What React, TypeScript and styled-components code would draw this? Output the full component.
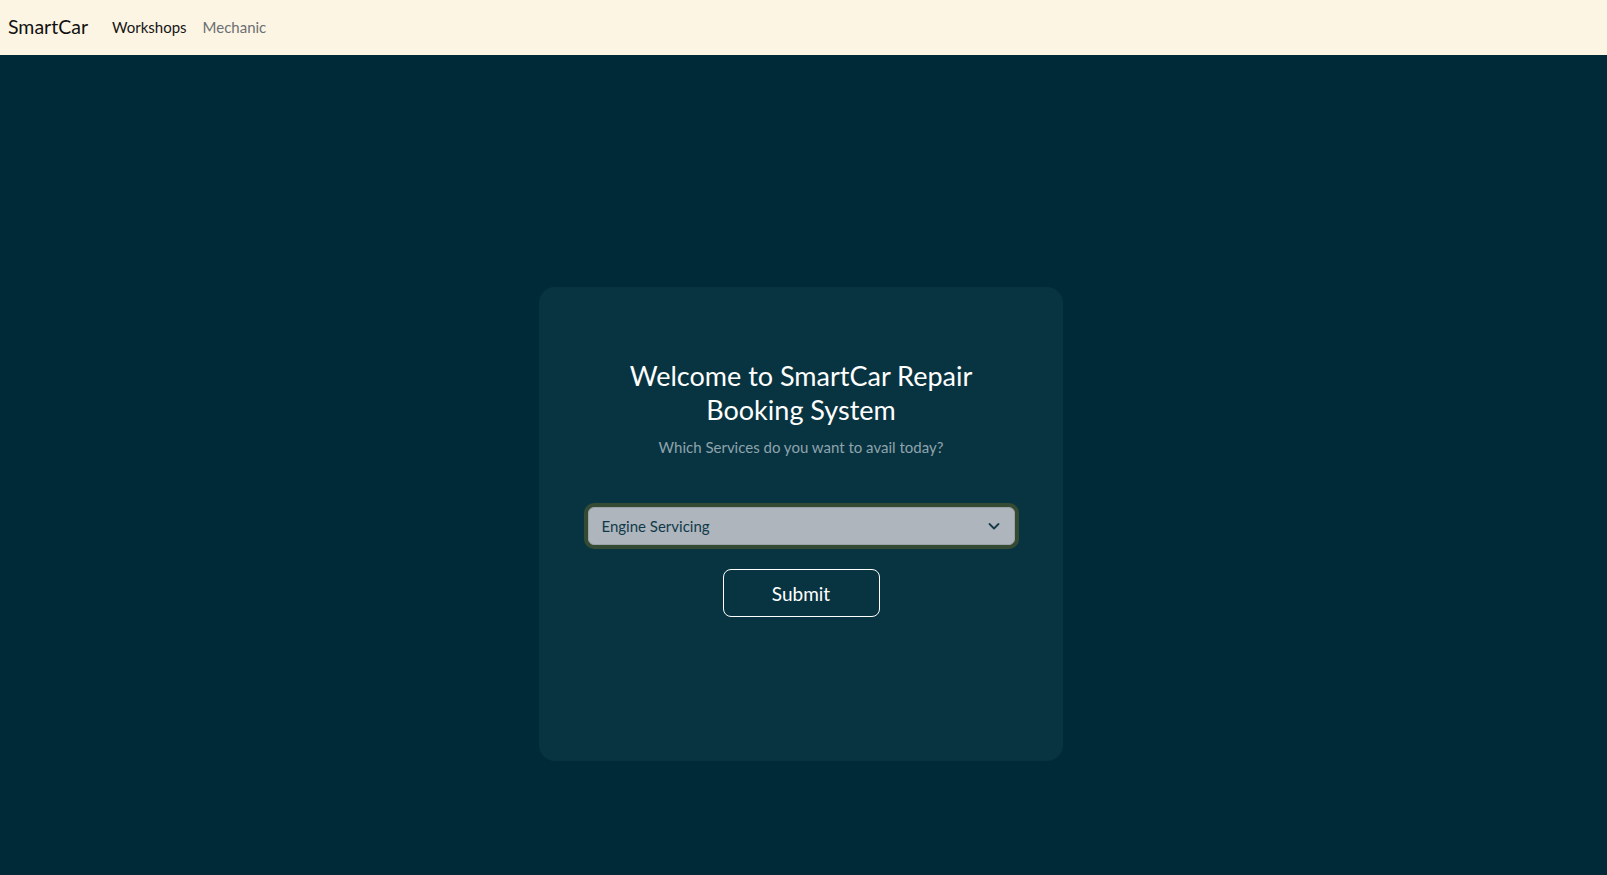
import React from "react";
import styled, { createGlobalStyle } from "styled-components";

const Global = createGlobalStyle`
  html, body { margin: 0; padding: 0; }
  body {
    background: #012a38;
    font-family: "Source Sans Pro", Lato, "Noto Sans", sans-serif;
  }
  * { box-sizing: border-box; }
`;

const Page = styled.div`
  min-height: 875px;
  background: #012a38;
  display: flex;
  flex-direction: column;
`;

const NavBar = styled.nav`
  height: 55px;
  background: #fdf5e3;
  display: flex;
  align-items: center;
  padding: 0 8px 2px;
`;

const Brand = styled.a`
  font-size: 19.5px;
  color: #111;
  text-decoration: none;
  margin-right: 24px;
`;

const NavLink = styled.a<{ $muted?: boolean }>`
  font-size: 15px;
  color: ${(p) => (p.$muted ? "#6b6f73" : "#151515")};
  text-decoration: none;
  margin-right: 16px;
`;

const Main = styled.main`
  display: flex;
  justify-content: center;
  padding-top: 232px;
  padding-right: 5px;
`;

const Card = styled.section`
  width: 524px;
  height: 474px;
  background: #083441;
  border-radius: 16px;
  padding: 72px 48px 0;
  display: flex;
  flex-direction: column;
  align-items: center;
`;

const Title = styled.h1`
  margin: 0;
  font-weight: 400;
  font-size: 27px;
  line-height: 34px;
  color: #ffffff;
  text-align: center;
  width: 400px;
`;

const Subtitle = styled.p`
  margin: 9px 0 0;
  font-size: 15px;
  line-height: 22px;
  color: #8fa3ad;
`;

const SelectWrap = styled.div`
  position: relative;
  width: 427px;
  margin-top: 49px;
`;

const Select = styled.select`
  appearance: none;
  width: 100%;
  height: 38px;
  background: #aeb5bc;
  border: 1px solid #9aa3a8;
  border-radius: 6px;
  box-shadow: 0 0 0 4px #354a33;
  padding: 0 36px 0 13px;
  font-family: inherit;
  font-size: 15px;
  color: #103a4b;
  outline: none;
`;

const Chevron = styled.svg`
  position: absolute;
  right: 15px;
  top: 14px;
  pointer-events: none;
`;

const SubmitButton = styled.button`
  margin-top: 24px;
  width: 157px;
  height: 48px;
  background: transparent;
  border: 1px solid #ffffff;
  border-radius: 8px;
  color: #ffffff;
  font-family: inherit;
  font-size: 19px;
  cursor: pointer;
`;

export default function App() {
  return (
    <Page>
      <Global />
      <NavBar>
        <Brand href="#">SmartCar</Brand>
        <NavLink href="#">Workshops</NavLink>
        <NavLink href="#" $muted>
          Mechanic
        </NavLink>
      </NavBar>
      <Main>
        <Card>
          <Title>Welcome to SmartCar Repair Booking System</Title>
          <Subtitle>Which Services do you want to avail today?</Subtitle>
          <SelectWrap>
            <Select defaultValue="engine">
              <option value="engine">Engine Servicing</option>
              <option value="oil">Oil Change</option>
              <option value="brake">Brake Repair</option>
            </Select>
            <Chevron width="12" height="10" viewBox="0 0 12 10">
              <path d="M1.5 3 L6 7.5 L10.5 3" fill="none" stroke="#163a48" strokeWidth="1.8" strokeLinecap="round" strokeLinejoin="round" />
            </Chevron>
          </SelectWrap>
          <SubmitButton>Submit</SubmitButton>
        </Card>
      </Main>
    </Page>
  );
}
